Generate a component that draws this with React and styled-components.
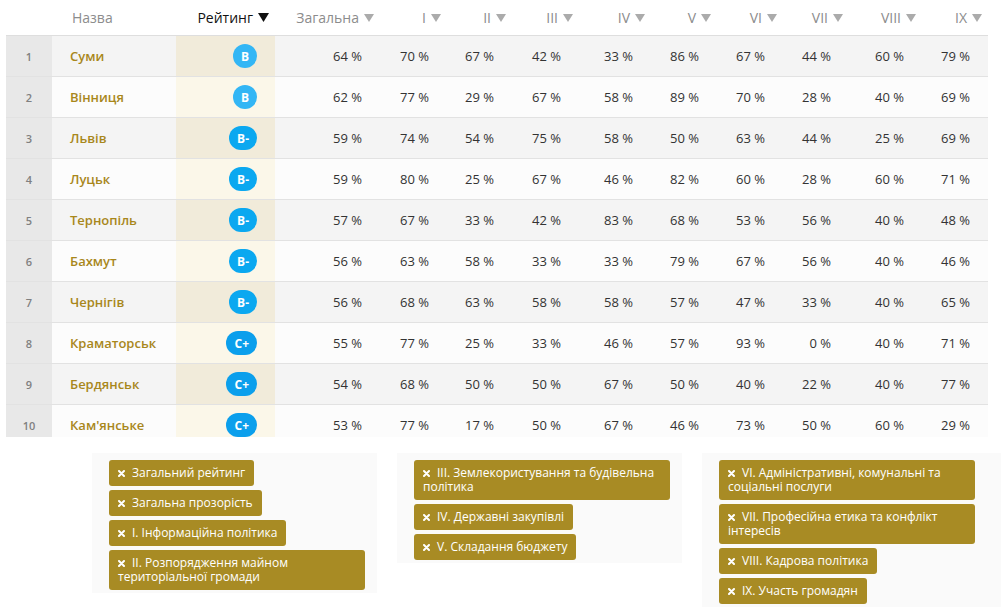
import React from 'react';
import styled, { createGlobalStyle } from 'styled-components';

const GlobalStyle = createGlobalStyle`
  body {
    margin: 0;
    background: #fff;
    font-family: "Open Sans", "Noto Sans", sans-serif;
  }
`;

const COLS = '46px 124px 99px 105px 67px 65px 67px 72px 66px 66px 66px 73px 66px';

const Page = styled.div`
  width: 1001px;
`;

const TableWrap = styled.div`
  margin-left: 6px;
  width: 982px;
  height: 437px;
  overflow: hidden;
`;

const Row = styled.div`
  display: grid;
  grid-template-columns: ${COLS};
  height: 40px;
  border-bottom: 1px solid #e2e2e2;
  background: ${(p) => (p.$odd ? '#f4f4f4' : '#fcfcfc')};
`;

const HeadRow = styled(Row)`
  height: 35px;
  background: #fff;
  border-bottom: 1px solid #dedede;
`;

const HeadCell = styled.div`
  display: flex;
  align-items: center;
  justify-content: ${(p) => (p.$left ? 'flex-start' : 'flex-end')};
  gap: 5px;
  padding: ${(p) => (p.$left ? '0 0 0 20px' : '0 6px 0 0')};
  font-size: 14px;
  color: ${(p) => (p.$active ? '#111' : '#8c8c8c')};
  white-space: nowrap;
`;

const Arrow = styled.svg`
  width: ${(p) => (p.$active ? 11 : 10)}px;
  height: ${(p) => (p.$active ? 9 : 8)}px;
  fill: ${(p) => (p.$active ? '#111' : '#ababab')};
`;

const IndexCell = styled.div`
  display: flex;
  align-items: center;
  justify-content: center;
  background: #e8e8e8;
  font-size: 11px;
  font-weight: 600;
  color: #808080;
`;

const NameCell = styled.div`
  display: flex;
  align-items: center;
  padding-left: 18px;
  font-size: 13px;
  font-weight: 600;
  color: #a8871b;
`;

const RatingCell = styled.div`
  display: flex;
  align-items: center;
  justify-content: flex-end;
  padding-right: 18px;
  background: ${(p) => (p.$odd ? '#f1ebda' : '#fbf7e9')};
`;

const Badge = styled.span`
  display: inline-flex;
  align-items: center;
  justify-content: center;
  height: 24px;
  min-width: 24px;
  padding: 0 ${(p) => (p.$wide ? 8 : 0)}px;
  box-sizing: border-box;
  border-radius: 12px;
  background: ${(p) => p.$color};
  color: #fff;
  font-size: 12px;
  font-weight: 700;
`;

const ValueCell = styled.div`
  display: flex;
  align-items: center;
  justify-content: flex-end;
  padding-right: 18px;
  font-size: 13px;
  color: #333;
`;

const Filters = styled.div`
  display: grid;
  grid-template-columns: 285px 285px 299px;
  gap: 20px;
  margin-top: 16px;
  padding-left: 92px;
  align-items: start;
`;

const Panel = styled.div`
  display: flex;
  flex-direction: column;
  align-items: flex-start;
  gap: 4px;
  padding: 7px 8px 3px 17px;
  background: #fafafa;
  min-height: ${(p) => p.$min || 0}px;
  box-sizing: border-box;
`;

const Tag = styled.div`
  max-width: 256px;
  box-sizing: border-box;
  padding: 6px 9px;
  border-radius: 3px;
  background: #a88b24;
  color: #fff;
  font-size: 12px;
  line-height: 14px;
`;

const Cross = styled.svg`
  width: 7px;
  height: 7px;
  margin-right: 7px;
  stroke: #fff;
  stroke-width: 2;
  stroke-linecap: round;
`;

const headers = ['Загальна', 'I', 'II', 'III', 'IV', 'V', 'VI', 'VII', 'VIII', 'IX'];

const rows = [
  ['Суми', 'B', [64, 70, 67, 42, 33, 86, 67, 44, 60, 79]],
  ['Вінниця', 'B', [62, 77, 29, 67, 58, 89, 70, 28, 40, 69]],
  ['Львів', 'B-', [59, 74, 54, 75, 58, 50, 63, 44, 25, 69]],
  ['Луцьк', 'B-', [59, 80, 25, 67, 46, 82, 60, 28, 60, 71]],
  ['Тернопіль', 'B-', [57, 67, 33, 42, 83, 68, 53, 56, 40, 48]],
  ['Бахмут', 'B-', [56, 63, 58, 33, 33, 79, 67, 56, 40, 46]],
  ['Чернігів', 'B-', [56, 68, 63, 58, 58, 57, 47, 33, 40, 65]],
  ['Краматорськ', 'C+', [55, 77, 25, 33, 46, 57, 93, 0, 40, 71]],
  ['Бердянськ', 'C+', [54, 68, 50, 50, 67, 50, 40, 22, 40, 77]],
  ["Кам'янське", 'C+', [53, 77, 17, 50, 67, 46, 73, 50, 60, 29]],
];

const badgeColor = { B: '#33b6f5', 'B-': '#0ba8f0', 'C+': '#0b9fec' };

const filterGroups = [
  {
    min: 139,
    items: [
      'Загальний рейтинг',
      'Загальна прозорість',
      'I. Інформаційна політика',
      'II. Розпорядження майном територіальної громади',
    ],
  },
  {
    min: 0,
    items: ['III. Землекористування та будівельна політика', 'IV. Державні закупівлі', 'V. Складання бюджету'],
  },
  {
    min: 154,
    items: [
      'VI. Адміністративні, комунальні та соціальні послуги',
      'VII. Професійна етика та конфлікт інтересів',
      'VIII. Кадрова політика',
      'IX. Участь громадян',
    ],
  },
];

const SortArrow = ({ active }) => (
  <Arrow $active={active} viewBox="0 0 10 8">
    <polygon points="0,0 10,0 5,8" />
  </Arrow>
);

const App = () => {
  return (
    <Page>
      <GlobalStyle />
      <TableWrap>
        <HeadRow>
          <HeadCell />
          <HeadCell $left>Назва</HeadCell>
          <HeadCell $active>
            Рейтинг <SortArrow active />
          </HeadCell>
          {headers.map((h) => (
            <HeadCell key={h}>
              {h} <SortArrow />
            </HeadCell>
          ))}
        </HeadRow>
        {rows.map(([name, grade, values], i) => (
          <Row key={name} $odd={i % 2 === 0}>
            <IndexCell>{i + 1}</IndexCell>
            <NameCell>{name}</NameCell>
            <RatingCell $odd={i % 2 === 0}>
              <Badge $color={badgeColor[grade]} $wide={grade.length > 1}>
                {grade}
              </Badge>
            </RatingCell>
            {values.map((v, j) => (
              <ValueCell key={j}>{v} %</ValueCell>
            ))}
          </Row>
        ))}
      </TableWrap>
      <Filters>
        {filterGroups.map((g, gi) => (
          <Panel key={gi} $min={g.min}>
            {g.items.map((t) => (
              <Tag key={t}>
                <Cross viewBox="0 0 7 7">
                  <path d="M1 1 L6 6 M6 1 L1 6" />
                </Cross>
                {t}
              </Tag>
            ))}
          </Panel>
        ))}
      </Filters>
    </Page>
  );
};

export default App;
